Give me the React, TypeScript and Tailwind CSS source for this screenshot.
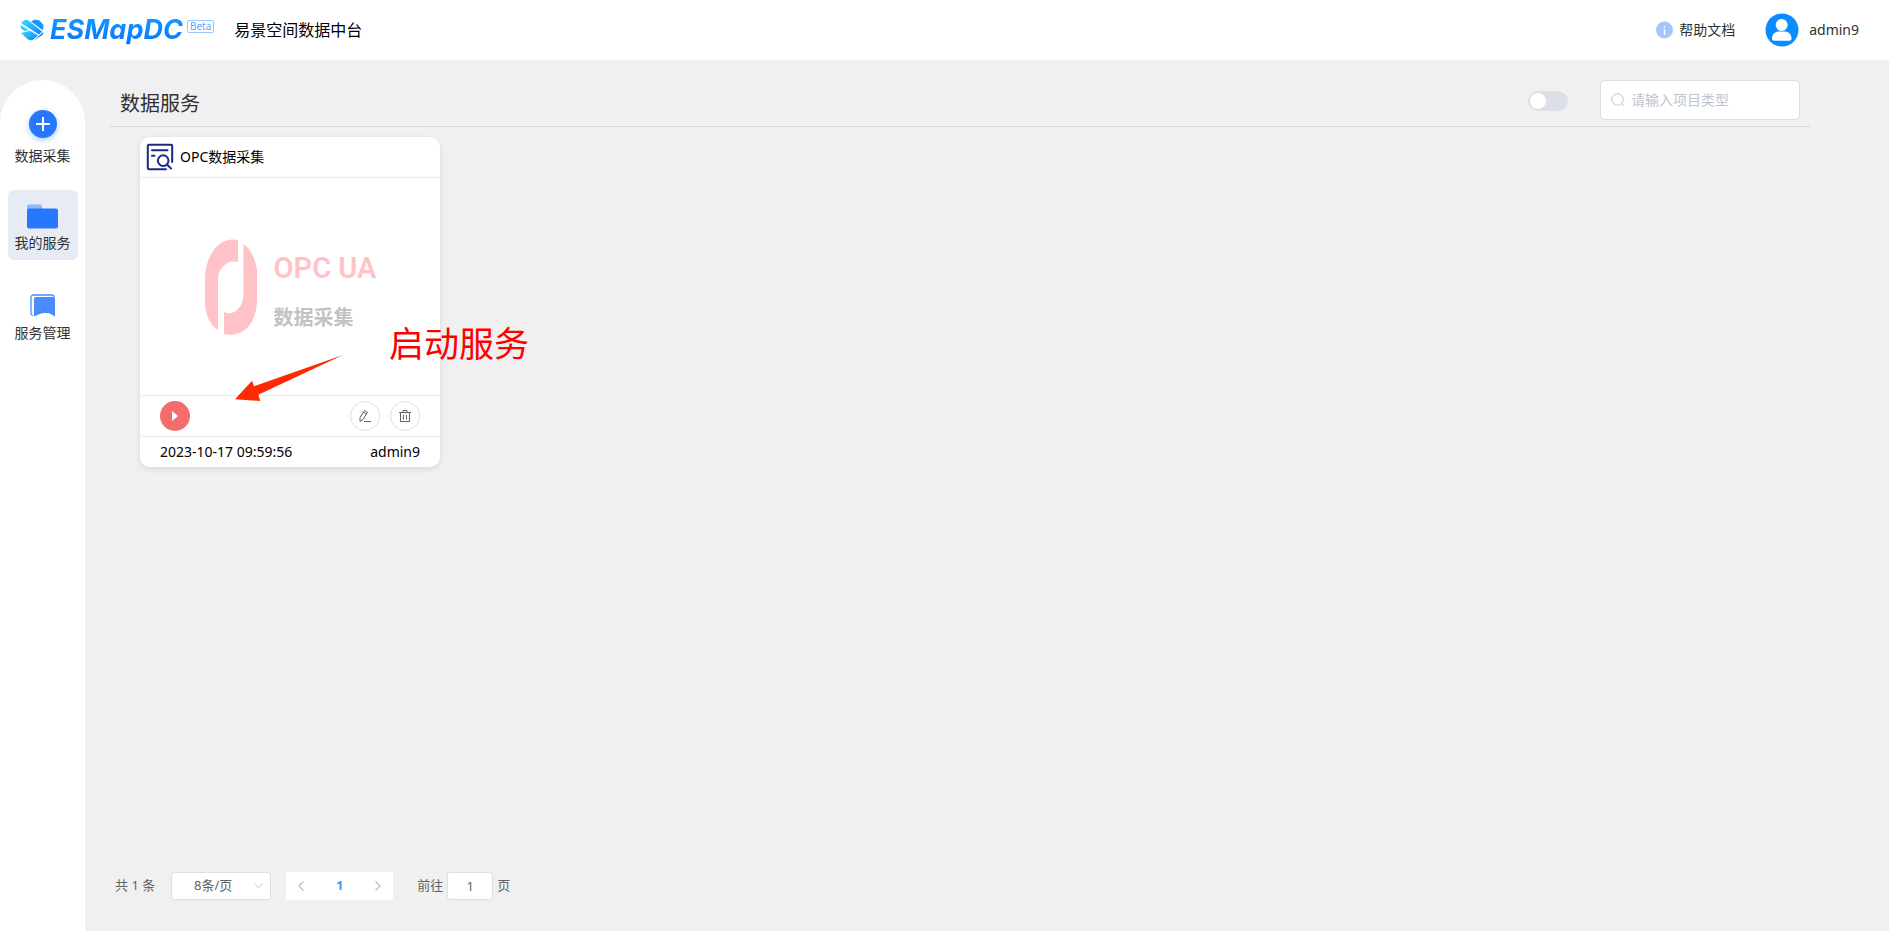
import { useState } from "react";

function LogoMark() {
  return (
    <svg width="24" height="22" viewBox="0 0 24 22" aria-hidden="true">
      <defs>
        <linearGradient id="mark" x1="0" y1="0" x2="1" y2="1">
          <stop offset="0" stopColor="#35ddff" />
          <stop offset="0.500" stopColor="#22b4fb" />
          <stop offset="1" stopColor="#0a78f5" />
        </linearGradient>
      </defs>
      <path d="M1 4 5 .8 8 1.200 22 12.500 19 15.500Z" fill="url(#mark)" />
      <path d="M11 2.500 15 .500 19.500 1.500 23.500 6 23 11.500Z" fill="#169bf8" />
      <path d="M.500 6 9 11 4.500 12 1 9.500Z" fill="#35ccff" />
      <path d="M1 14 10 11.800 18 16.500 12 21.500 8 20.500Z" fill="url(#mark)" />
      <path d="M19.500 16.500 23.500 12.500 22.500 16 13.500 21.500Z" fill="#0a78f5" />
    </svg>
  );
}

function Avatar() {
  return (
    <svg width="34" height="34" viewBox="0 0 34 34" aria-hidden="true">
      <circle cx="17" cy="17" r="16.500" fill="#0a8bff" />
      <circle cx="16.700" cy="12" r="6" fill="#fff" />
      <path d="M7 25.500c0-4.500 3.500-7 7-7h5.500c3.500 0 7 2.500 7 7 0 1.500-1 2.200-2.200 2.200H9.200C8 27.700 7 27 7 25.500Z" fill="#fff" />
    </svg>
  );
}

function DocSearchIcon() {
  return (
    <svg width="28" height="28" viewBox="0 0 28 28" fill="none" stroke="#1a2a84" strokeWidth="2" strokeLinecap="round" strokeLinejoin="round" aria-hidden="true">
      <path d="M20 26.200H3A1.200 1.200 0 0 1 1.800 25V3A1.200 1.200 0 0 1 3 1.800h22A1.200 1.200 0 0 1 26.200 3v16" />
      <path d="M6 7.200h15.500M6 12.700h2.500" />
      <circle cx="17.200" cy="17.600" r="5.300" />
      <path d="m21 21.500 4 4" />
    </svg>
  );
}

function OpcMark() {
  return (
    <svg width="54" height="96" viewBox="0 0 54 96" fill="#ffc3c7" aria-hidden="true">
      <path d="M34 1C14-3 1 17 1 42V66C2 77 6 86 14 91V41C14 29 23 20 34 23Z" />
      <path d="M39.500 5C47 10 51 20 53 30V60C53 85 39 99 20 95V73C31 78 39.500 67 39.500 54Z" />
    </svg>
  );
}

const navItems = [
  {
    label: "数据采集",
    style: "gap-1.5 pt-2",
    icon: (
      <span className="flex size-7 items-center justify-center rounded-full bg-[#2878ff] shadow-[0_2px_6px_#2878ff60]">
        <svg width="14" height="14" viewBox="0 0 14 14" aria-hidden="true">
          <path d="M7 0v14M0 7h14" stroke="#fff" strokeWidth="2" />
        </svg>
      </span>
    ),
  },
  {
    label: "我的服务",
    style: "gap-px rounded-md bg-[#e7ecf4] pt-2.5",
    icon: (
      <svg width="32" height="25" viewBox="0 0 32 25" aria-hidden="true">
        <path d="M0 2.500A2 2 0 0 1 2 .5h11a2 2 0 0 1 2 2V8H0Z" fill="#8fb8fa" />
        <rect y="4.500" width="31" height="20" rx="2" fill="#2878ff" />
      </svg>
    ),
  },
  {
    label: "服务管理",
    style: "gap-px pt-2.5",
    icon: (
      <svg width="26" height="24" viewBox="0 0 26 24" aria-hidden="true">
        <path d="M3 21.500A2 2 0 0 1 1 19.500V3.500A2.500 2.500 0 0 1 3.500 1H22a2.500 2.500 0 0 1 2.400 2" fill="none" stroke="#4a8cff" strokeWidth="1.300" />
        <path d="M4 5A2 2 0 0 1 6 3h17a2 2 0 0 1 2 2v17.500c-3-1.500-4-3.500-9-3.500-6 0-8 2-12 3.500Z" fill="#4a8cff" />
      </svg>
    ),
  },
];

function Header() {
  return (
    <header className="flex h-[60px] items-center bg-white pr-[30px] pl-5">
      <a href="#" className="flex items-center" aria-label="ESMapDC">
        <LogoMark />
        <span className="ml-1.5 bg-gradient-to-b from-[#1a9bff] to-[#0a72ff] bg-clip-text pr-1 font-[Inter,sans-serif] text-[27px] leading-8 font-bold text-transparent italic">
          ESMapDC
        </span>
        <span className="mb-2 flex h-[13px] items-center rounded-xs border border-[#9cc8ff] px-0.5 text-[10px] leading-none text-[#5aa6ff]">Beta</span>
      </a>
      <span className="ml-5 text-base text-black">易景空间数据中台</span>
      <a href="#" className="ml-auto flex items-center gap-1.5 text-sm text-[#303133]">
        <svg width="17" height="18" viewBox="0 0 17 18" aria-hidden="true">
          <circle cx="8.500" cy="9" r="8.500" fill="#a4c6ff" />
          <path d="M8.500 5v1.800M8.500 8v6" stroke="#fff" strokeWidth="1.400" />
        </svg>
        帮助文档
      </a>
      <button type="button" className="ml-[30px] flex items-center gap-2.5 text-sm text-[#303133]">
        <Avatar />
        admin9
      </button>
    </header>
  );
}

function Sidebar() {
  return (
    <nav className="flex w-[85px] shrink-0 flex-col items-center gap-5 rounded-t-[43px] bg-white pt-5">
      {navItems.map((item) => (
        <a
          key={item.label}
          href="#"
          className={`flex size-[70px] flex-col items-center text-sm text-[#303133] ${item.style}`}
        >
          <span className="flex h-8 items-center">{item.icon}</span>
          <span>{item.label}</span>
        </a>
      ))}
    </nav>
  );
}

function ServiceCard() {
  return (
    <article className="relative w-[300px] rounded-[10px] bg-white text-sm text-black shadow-[0_2px_6px_rgba(0,0,0,0.1)]">
      <h2 className="flex h-10 items-center gap-1.5 pl-1.5">
        <DocSearchIcon />
        OPC数据采集
      </h2>
      <div className="flex h-[219px] items-center justify-center gap-4 border-y border-[#ececec]">
        <OpcMark />
        <div className="flex flex-col gap-[18px] pt-2">
          <span className="font-[Roboto,sans-serif] text-[29px] leading-9 font-semibold text-[#ffc3c7]">OPC UA</span>
          <span className="text-xl leading-7 font-bold text-[#c2c2c2]">数据采集</span>
        </div>
      </div>
      <div className="flex h-10 items-center gap-2.5 px-5">
        <button type="button" aria-label="启动" className="mr-auto flex size-[30px] items-center justify-center rounded-full bg-[#f56c6c]">
          <svg width="6" height="10" viewBox="0 0 6 10" aria-hidden="true"><path d="M0 0 6 5 0 10Z" fill="#fff" /></svg>
        </button>
        <button type="button" aria-label="编辑" className="flex size-[30px] items-center justify-center rounded-full border border-[#dcdfe6]">
          <svg width="14" height="14" viewBox="0 0 14 14" fill="none" stroke="#606266" aria-hidden="true">
            <path d="m2 8.500 4.500-7 3 1.800L5 10.500l-3 2Zm3.500-5.200 3 1.900M6 12.500h7" />
          </svg>
        </button>
        <button type="button" aria-label="删除" className="flex size-[30px] items-center justify-center rounded-full border border-[#dcdfe6]">
          <svg width="14" height="14" viewBox="0 0 14 14" fill="none" stroke="#606266" aria-hidden="true">
            <path d="M1 3.500h12M5 3V1.500h4V3M2.500 3.500v9h9v-9M5.500 6v4.500M8.500 6v4.500" />
          </svg>
        </button>
      </div>
      <div className="flex h-[31px] items-center justify-between border-t border-[#ececec] px-5">
        <time>2023-10-17 09:59:56</time>
        <span>admin9</span>
      </div>
      <svg className="absolute top-[217px] left-[95px]" width="110" height="48" viewBox="0 0 110 48" aria-hidden="true">
        <path d="M108 1 19 32.300 17 26.700 0 45.300 25.300 47 23.300 40.700Z" fill="#ff2a04" />
      </svg>
      <strong className="absolute top-[181px] left-[249px] text-[35px] leading-[52px] font-normal whitespace-nowrap text-[#ff0000]">启动服务</strong>
    </article>
  );
}

function Pagination() {
  return (
    <footer className="flex h-7 items-center pl-[5px] text-[13px] text-[#606266]">
      <span>共 1 条</span>
      <div className="relative ml-4">
        <select aria-label="每页条数" className="h-7 w-[100px] appearance-none rounded-[3px] border border-[#dcdfe6] bg-white pr-4 text-center">
          <option>8条/页</option>
        </select>
        <svg className="pointer-events-none absolute top-[11px] right-2" width="9" height="6" viewBox="0 0 9 6" fill="none" stroke="#c0c4cc" aria-hidden="true"><path d="m.5.500 4 4.500 4-4.500" /></svg>
      </div>
      <div className="ml-[15px] flex h-7 w-[107px] items-center justify-between bg-white px-3">
        <button type="button" aria-label="上一页">
          <svg width="6" height="10" viewBox="0 0 6 10" fill="none" stroke="#c0c4cc" strokeWidth="1.500" aria-hidden="true"><path d="M5.500.500 1 5l4.500 4.500" /></svg>
        </button>
        <button type="button" className="font-bold text-[#409eff]">1</button>
        <button type="button" aria-label="下一页">
          <svg width="6" height="10" viewBox="0 0 6 10" fill="none" stroke="#c0c4cc" strokeWidth="1.500" aria-hidden="true"><path d="M.5.500 5 5 .5 9.500" /></svg>
        </button>
      </div>
      <label className="ml-6 flex items-center gap-1">
        前往
        <input defaultValue="1" className="h-7 w-[46px] rounded-[3px] border border-[#dcdfe6] bg-white text-center" />
        页
      </label>
    </footer>
  );
}

export default function App() {
  const [on, setOn] = useState(false);
  return (
    <div className="flex min-h-screen flex-col bg-[#f0f0f0] font-['Noto_Sans','Noto_Sans_CJK_SC',sans-serif]">
      <Header />
      <div className="flex flex-1 pt-5">
        <Sidebar />
        <main className="flex flex-1 flex-col pr-[79px] pb-[31px] pl-[25px]">
          <div className="flex h-[47px] items-start border-b border-[#d8d8d8] px-2.5">
            <h1 className="mt-2 mr-auto text-xl leading-8 text-[#303133]">数据服务</h1>
            <input
              type="checkbox"
              role="switch"
              aria-label="切换"
              checked={on}
              onChange={() => setOn(!on)}
              className="mt-[11px] h-5 w-10 appearance-none rounded-full bg-[#dcdfe6] before:m-0.5 before:block before:size-4 before:rounded-full before:bg-white checked:bg-[#409eff] checked:before:ml-[22px]"
            />
            <label className="ml-8 flex h-10 w-[200px] items-center gap-1.5 rounded border border-[#dcdfe6] bg-white px-2.5">
              <svg width="14" height="14" viewBox="0 0 14 14" fill="none" stroke="#c0c4cc" aria-hidden="true">
                <circle cx="6.500" cy="6.500" r="5.700" />
                <path d="m10.500 10.500 2.500 2.700" />
              </svg>
              <input aria-label="项目类型" placeholder="请输入项目类型" className="min-w-0 flex-1 text-sm outline-none placeholder:text-[#c0c4cc]" />
            </label>
          </div>
          <div className="flex flex-1 items-start pt-2.5 pl-[30px]">
            <ServiceCard />
          </div>
          <Pagination />
        </main>
      </div>
    </div>
  );
}
